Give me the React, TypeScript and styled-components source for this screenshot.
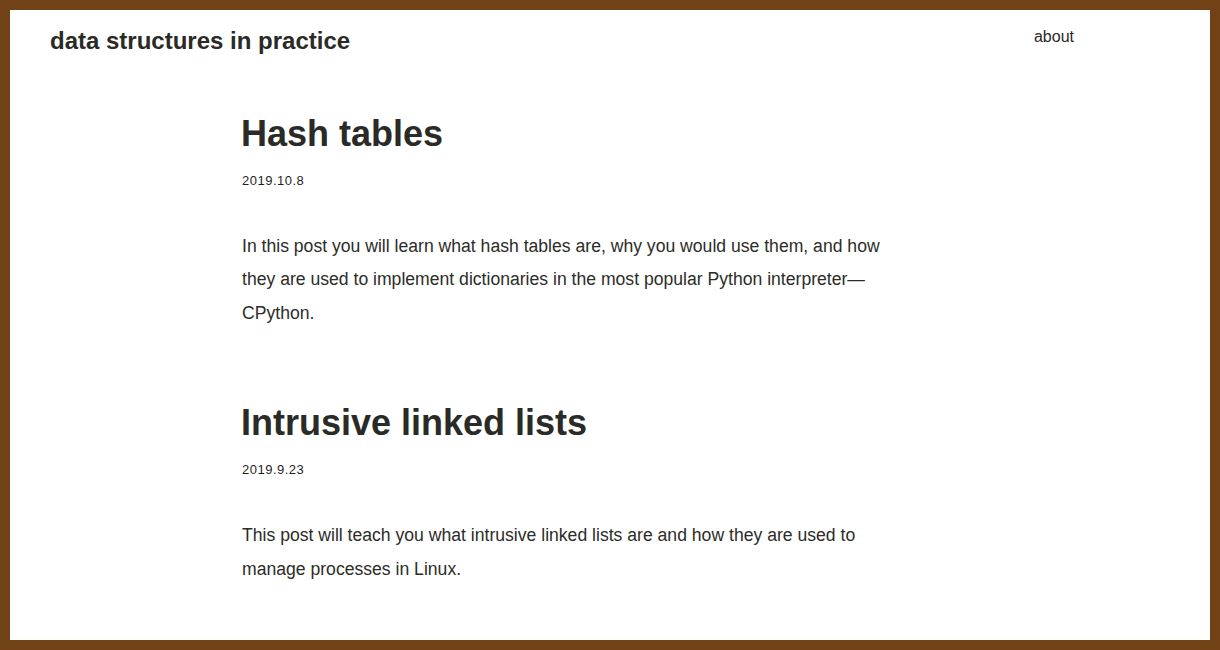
import React from "react";
import styled, { createGlobalStyle } from "styled-components";

const Global = createGlobalStyle`
  html, body { margin: 0; padding: 0; background: #fff; }
  body { font-family: "Liberation Sans", Arial, sans-serif; color: #2a2a26; }
`;

const Frame = styled.div`
  box-sizing: border-box;
  width: 1220px;
  height: 650px;
  border: 10px solid #714215;
  background: #fff;
  overflow: hidden;
`;

const Header = styled.header`
  display: flex;
  justify-content: space-between;
  align-items: flex-start;
  padding: 0 136px 0 40px;
`;

const SiteTitle = styled.a`
  font-size: 24px;
  font-weight: 700;
  color: #2a2a26;
  text-decoration: none;
  line-height: 28px;
  margin-top: 17px;
`;

const NavLink = styled.a`
  font-size: 16px;
  color: #2a2a26;
  text-decoration: none;
  line-height: 20px;
  margin-top: 17px;
`;

const Main = styled.main`
  padding: 0 0 0 232px;
  width: 660px;
`;

const Post = styled.article<{ $first?: boolean }>`
  margin-top: ${(p) => (p.$first ? "58px" : "72px")};
`;

const Title = styled.h2`
  margin: 0 0 0 -1px;
  font-size: 36px;
  font-weight: 700;
  line-height: 42px;
  color: #2a2a26;
`;

const DateLine = styled.div`
  margin-top: 18px;
  font-size: 13px;
  letter-spacing: 0.5px;
  line-height: 16px;
  color: #1f1f1c;
`;

const Excerpt = styled.p`
  margin: 41px 0 0;
  font-size: 17.6px;
  line-height: 33.44px;
  color: #2c2c29;
`;

const posts = [
  {
    title: "Hash tables",
    date: "2019.10.8",
    text: "In this post you will learn what hash tables are, why you would use them, and how they are used to implement dictionaries in the most popular Python interpreter\u2014CPython.",
  },
  {
    title: "Intrusive linked lists",
    date: "2019.9.23",
    text: "This post will teach you what intrusive linked lists are and how they are used to manage processes in Linux.",
  },
];

export default function App() {
  return (
    <>
      <Global />
      <Frame>
        <Header>
          <SiteTitle href="#">data structures in practice</SiteTitle>
          <NavLink href="#">about</NavLink>
        </Header>
        <Main>
          {posts.map((p, i) => (
            <Post key={p.title} $first={i === 0}>
              <Title>{p.title}</Title>
              <DateLine>{p.date}</DateLine>
              <Excerpt>{p.text}</Excerpt>
            </Post>
          ))}
        </Main>
      </Frame>
    </>
  );
}
